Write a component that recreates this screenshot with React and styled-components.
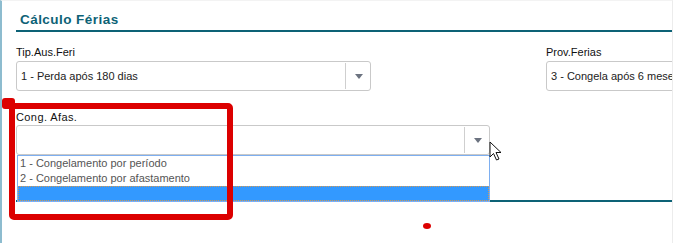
import React from "react";
import styled, { createGlobalStyle } from "styled-components";

const GlobalStyle = createGlobalStyle`
  html, body {
    margin: 0;
    padding: 0;
    background: #fff;
  }
  body {
    font-family: "Liberation Sans", Arial, sans-serif;
  }
`;

const Page = styled.div`
  position: relative;
  width: 673px;
  height: 243px;
  box-sizing: border-box;
  border-left: 2px solid #8dbccf;
  border-right: 1px solid #ececec;
  border-top: 1px solid #f3f3f3;
  overflow: hidden;
  background: #fff;
`;

const Section = styled.section`
  margin-left: 14px;
  display: flex;
  flex-direction: column;
`;

const Header = styled.div`
  height: 31px;
  padding: 11px 0 0 4px;
  box-sizing: border-box;
  border-bottom: 2px solid #0d6276;
`;

const Title = styled.h2`
  margin: 0;
  font-size: 13.5px;
  line-height: 16px;
  font-weight: 700;
  letter-spacing: 0.45px;
  color: #0d6276;
`;

const Row = styled.div`
  display: flex;
  gap: ${p => p.$gap || 0}px;
  margin-top: ${p => p.$top}px;
  white-space: nowrap;
`;

const Field = styled.div`
  display: flex;
  flex-direction: column;
  width: ${p => p.$width}px;
  flex-shrink: 0;
`;

const Label = styled.label`
  font-size: 11px;
  line-height: 14px;
  color: #111;
  margin-bottom: ${p => p.$gap}px;
  letter-spacing: ${p => p.$spaced ? "0.4px" : "0"};
`;

const SelectWrap = styled.div`
  position: relative;
`;

const SelectBox = styled.div`
  display: flex;
  align-items: stretch;
  height: 30px;
  box-sizing: border-box;
  border: 1px solid #c9c9c9;
  border-radius: 3px;
  background: #fff;
`;

const Value = styled.span`
  flex: 1;
  display: flex;
  align-items: center;
  padding-left: 4px;
  font-size: 11px;
  color: #222;
  overflow: hidden;
`;

const ArrowCell = styled.span`
  width: 23px;
  margin: 1px 0;
  border-left: 1px solid #cfcfcf;
  display: flex;
  align-items: center;
  justify-content: center;
  padding-left: 1px;

  &::after {
    content: "";
    border-left: 4px solid transparent;
    border-right: 4px solid transparent;
    border-top: 5px solid #6c7380;
  }
`;

const List = styled.ul`
  position: absolute;
  top: 100%;
  left: 1px;
  right: 0;
  margin: 0;
  padding: 0;
  list-style: none;
  border: 1px solid #7eaff0;
  background: #fff;
  z-index: 2;
`;

const Option = styled.li`
  height: 15px;
  line-height: 15px;
  padding-left: 2px;
  font-size: 11px;
  color: #555;
  box-sizing: border-box;
  background: ${p => p.$selected ? "#3399ff" : "transparent"};
  border: ${p => p.$selected ? "1px dotted #d69a52" : "none"};
`;

const Divider = styled.div`
  margin-top: 45px;
  height: 2px;
  background: #0d6276;
`;

const Highlight = styled.div`
  position: absolute;
  left: 7px;
  top: 102px;
  width: 224px;
  height: 117px;
  box-sizing: border-box;
  border: 6px solid #dc0000;
  border-radius: 5px;
  z-index: 3;

  &::before {
    content: "";
    position: absolute;
    left: -13px;
    top: -11px;
    width: 13px;
    height: 11px;
    border-radius: 3px;
    background: #dc0000;
  }
`;

const Dot = styled.div`
  position: absolute;
  left: 421px;
  top: 222px;
  width: 8px;
  height: 6px;
  border-radius: 50%;
  background: #dc0000;
`;

const Cursor = styled.svg`
  position: absolute;
  left: 487px;
  top: 140px;
  z-index: 4;
`;

function Select({ value, children }) {
  return (
    <SelectWrap>
      <SelectBox>
        <Value>{value}</Value>
        <ArrowCell />
      </SelectBox>
      {children}
    </SelectWrap>
  );
}

export default function App() {
  return (
    <Page>
      <GlobalStyle />
      <Section>
        <Header>
          <Title>Cálculo Férias</Title>
        </Header>
        <Row $top={13} $gap={175}>
          <Field $width={355}>
            <Label $gap={2}>Tip.Aus.Feri</Label>
            <Select value="1 - Perda após 180 dias" />
          </Field>
          <Field $width={200}>
            <Label $gap={2}>Prov.Ferias</Label>
            <Select value="3 - Congela após 6 meses" />
          </Field>
        </Row>
        <Row $top={19}>
          <Field $width={474}>
            <Label $gap={1} $spaced>Cong. Afas.</Label>
            <Select value="">
              <List>
                <Option>1 - Congelamento por período</Option>
                <Option>2 - Congelamento por afastamento</Option>
                <Option $selected />
              </List>
            </Select>
          </Field>
        </Row>
        <Divider />
      </Section>
      <Highlight />
      <Dot />
      <Cursor width="14" height="21" viewBox="0 0 14 21">
        <path d="M1 1 L1 16 L4.5 12.5 L7.5 19 L10 18 L7 11.5 L12 11.5 Z" fill="#fff" stroke="#111" strokeWidth="1" strokeLinejoin="round" />
      </Cursor>
    </Page>
  );
}
